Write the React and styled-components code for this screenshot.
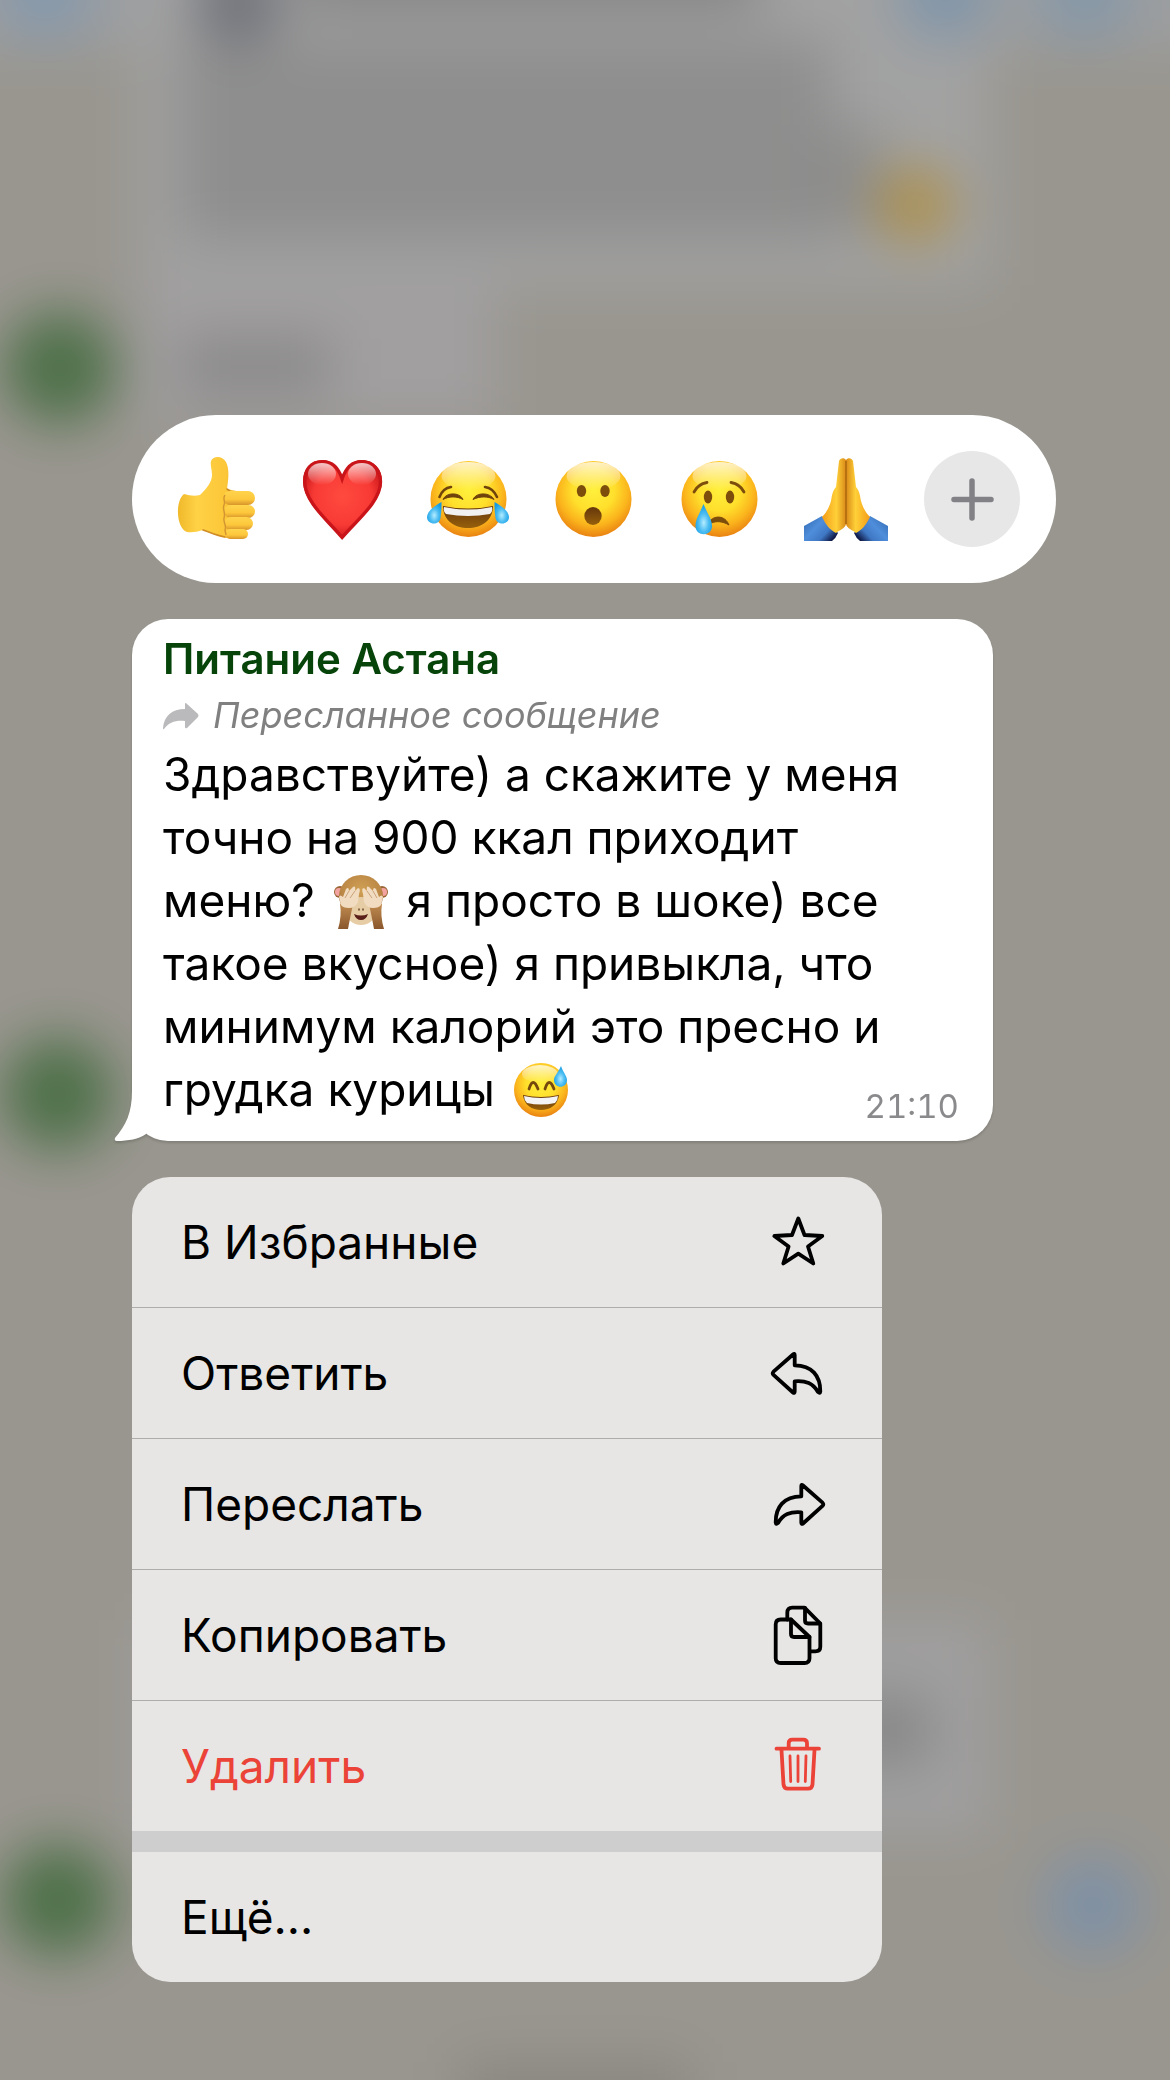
import React from 'react';
import styled, { createGlobalStyle } from 'styled-components';

const GlobalStyle = createGlobalStyle`
    * {
        box-sizing: border-box;
    }
    body {
        margin: 0;
        background-color: #99968f;
        font-family: Inter, "Liberation Sans", sans-serif;
        color: #000;
    }
    button {
        font: inherit;
        color: inherit;
        border: 0;
        padding: 0;
        background: none;
        cursor: pointer;
    }
    svg {
        display: block;
    }
`

const Screen = styled.main`
    position: relative;
    min-height: 100vh;
    padding: 415px 114px 98px 132px;
    display: flex;
    flex-direction: column;
    gap: 36px;
    overflow: hidden;
`

// dimmed chat behind the menu
const Backdrop = styled.svg`
    position: absolute;
    inset: 0;
    width: 100%;
    height: 100%;
    z-index: -1;
`

const Reactions = styled.div`
    width: 100%;
    max-width: 924px;
    padding: 36px 36px 36px 37px;
    border-radius: 84px;
    background-color: #fff;
    display: flex;
    justify-content: space-between;
`
const Reaction = styled.button`
    width: 96px;
    height: 96px;
    border-radius: 50%;
    background-color: ${({ $filled }) => $filled ? '#e7e7e7' : 'transparent'};
`

const Bubble = styled.article`
    position: relative;
    width: 100%;
    max-width: 861px;
    padding: 12px 34px 20px 31px;
    border-radius: 36px;
    background-color: #fff;
    filter: drop-shadow(0 2px 1px rgba(0, 0, 0, 0.14));
`
const Tail = styled.svg`
    position: absolute;
    left: -20px;
    bottom: 0;
`
const Sender = styled.h1`
    margin: 0;
    font-size: 42px;
    line-height: 56px;
    font-weight: 600;
    color: #06440a;
`
const Forwarded = styled.div`
    display: flex;
    align-items: center;
    gap: 14px;
    font-size: 36px;
    line-height: 56px;
    font-style: italic;
    color: #808080;
`
const Content = styled.div`
    display: grid;
`
const Message = styled.p`
    grid-area: 1 / 1;
    margin: 0;
    font-size: 46px;
    line-height: 63px;
    white-space: pre;
`
const InlineEmoji = styled.svg`
    display: inline-block;
    vertical-align: -13px;
    margin: 0 5px;
`
const Time = styled.time`
    grid-area: 1 / 1;
    align-self: end;
    justify-self: end;
    font-size: 33px;
    line-height: 30px;
    font-variant-numeric: tabular-nums;
    color: #8a8a8d;
`

const Menu = styled.div`
    width: 100%;
    max-width: 750px;
    border-radius: 38px;
    overflow: hidden;
    background-color: #e7e6e5;
    display: flex;
    flex-direction: column;
`
const MenuItem = styled.button`
    display: flex;
    align-items: center;
    justify-content: space-between;
    height: 130px;
    padding: 0 54px 0 49px;
    font-size: 46px;
    color: ${({ $danger }) => $danger ? '#eb4338' : '#000'};
`
const Divider = styled.div`
    height: ${({ $thick }) => $thick ? 21 : 1}px;
    background-color: ${({ $thick }) => $thick ? '#cfcece' : '#adadac'};
`

const ChatBackdrop = () => (
    <Backdrop viewBox="0 0 1170 2080" preserveAspectRatio="none" aria-hidden="true">
        <defs>
            <filter id="soft" filterUnits="userSpaceOnUse" x="-150" y="-150" width="1470" height="2380" colorInterpolationFilters="sRGB">
                <feGaussianBlur stdDeviation="27" />
            </filter>
        </defs>
        <rect width="1170" height="2080" fill="#99968f" />
        <g filter="url(#soft)">
            <rect x="-150" y="-150" width="1470" height="2380" fill="#99968f" />
            <rect x="-100" y="-100" width="1370" height="150" fill="#9c9ea0" />
            <rect x="140" y="-100" width="850" height="385" fill="#a2a2a2" />
            <rect x="140" y="270" width="355" height="150" fill="#a19fa0" />
            <rect x="180" y="40" width="650" height="200" fill="#8e8e8e" />
            <rect x="300" y="-80" width="460" height="90" fill="#858585" />
            <rect x="790" y="125" width="90" height="105" fill="#8d8d8c" />
            <rect x="180" y="338" width="150" height="56" fill="#8a898a" />
            <circle cx="238" cy="0" r="44" fill="#70727a" />
            <circle cx="45" cy="-8" r="44" fill="#8398ae" />
            <circle cx="944" cy="-6" r="46" fill="#7f95aa" />
            <circle cx="1085" cy="-6" r="44" fill="#8397a9" />
            <circle cx="915" cy="205" r="38" fill="#ae9049" />
            <circle cx="60" cy="368" r="56" fill="#4d7048" />
            <circle cx="58" cy="1094" r="56" fill="#4d7048" />
            <circle cx="58" cy="1900" r="56" fill="#4d7048" />
            <rect x="140" y="1620" width="850" height="215" fill="#a09fa0" />
            <rect x="190" y="1698" width="740" height="64" fill="#868687" />
            <circle cx="1093" cy="1905" r="48" fill="#7d90a6" />
            <rect x="460" y="2062" width="230" height="100" fill="#8a8680" />
        </g>
    </Backdrop>
)

const EmojiDefs = () => (
    <svg width="0" height="0" style={{ position: 'absolute' }} aria-hidden="true">
        <defs>
            <radialGradient id="face" cx="50%" cy="38%" r="62%">
                <stop offset="0" stopColor="#fff03c" />
                <stop offset="0.45" stopColor="#ffdf2c" />
                <stop offset="0.75" stopColor="#fbb41c" />
                <stop offset="1" stopColor="#e98212" />
            </radialGradient>
            <linearGradient id="shine" x1="0" y1="0" x2="0" y2="1">
                <stop offset="0" stopColor="#fff" stopOpacity="0.75" />
                <stop offset="1" stopColor="#fff" stopOpacity="0" />
            </linearGradient>
            <linearGradient id="mouth" x1="0" y1="0" x2="0" y2="1">
                <stop offset="0" stopColor="#65360b" />
                <stop offset="1" stopColor="#96600b" />
            </linearGradient>
            <radialGradient id="drop" cx="50%" cy="62%" r="60%">
                <stop offset="0" stopColor="#b5ecff" />
                <stop offset="0.5" stopColor="#4cbdf2" />
                <stop offset="1" stopColor="#159be3" />
            </radialGradient>
            <linearGradient id="thumb" x1="0" y1="0" x2="1" y2="0">
                <stop offset="0" stopColor="#f0b92b" />
                <stop offset="0.3" stopColor="#ffd145" />
                <stop offset="0.75" stopColor="#fcc739" />
                <stop offset="1" stopColor="#eeb02c" />
            </linearGradient>
            <linearGradient id="finger" x1="0" y1="0" x2="0" y2="1">
                <stop offset="0" stopColor="#ffd44c" />
                <stop offset="0.6" stopColor="#fdc73c" />
                <stop offset="1" stopColor="#d8942a" />
            </linearGradient>
            <radialGradient id="heart" cx="50%" cy="46%" r="60%">
                <stop offset="0" stopColor="#ff4a3f" />
                <stop offset="0.6" stopColor="#f83a35" />
                <stop offset="1" stopColor="#c00f14" />
            </radialGradient>
            <linearGradient id="palm" x1="0" y1="0" x2="1" y2="0">
                <stop offset="0" stopColor="#f39c18" />
                <stop offset="0.6" stopColor="#ffd038" />
                <stop offset="1" stopColor="#d98a18" />
            </linearGradient>
            <linearGradient id="sleeve" x1="0" y1="0" x2="1" y2="0.7">
                <stop offset="0" stopColor="#2f66ae" />
                <stop offset="0.45" stopColor="#4f8edb" />
                <stop offset="0.75" stopColor="#3f78c4" />
                <stop offset="1" stopColor="#101a48" />
            </linearGradient>
            <radialGradient id="fur" cx="50%" cy="35%" r="65%">
                <stop offset="0" stopColor="#d0a055" />
                <stop offset="0.7" stopColor="#bb8745" />
                <stop offset="1" stopColor="#976532" />
            </radialGradient>
            <linearGradient id="arm" x1="0" y1="0" x2="0" y2="1">
                <stop offset="0" stopColor="#c08b50" />
                <stop offset="1" stopColor="#8a572d" />
            </linearGradient>
        </defs>
    </svg>
)

const Face = () => (
    <>
        <circle cx="47.5" cy="48" r="38" fill="url(#face)" />
        <ellipse cx="47.5" cy="25" rx="27" ry="14" fill="url(#shine)" />
    </>
)

const ThumbsUp = () => (
    <svg width="96" height="96" viewBox="0 0 96 96">
        <path d="M15 43 Q24 46 31 44 C38 37 43 31 43 24 C43 18 41 14 42 10 C44 5 53 4 57 11 C61 19 59 30 58 38 L72 41 V84 Q64 90 50 85 L34 79 Q25 82 18 81 C7 77 6 50 15 43 Z" fill="url(#thumb)" />
        <path d="M58 38 Q62 40 63 44 M34 79 C40 81 49 85 56 86" fill="none" stroke="#cf8b25" strokeWidth="1.6" strokeLinecap="round" />
        <rect x="54" y="40" width="32" height="14" rx="7" fill="url(#finger)" />
        <rect x="55" y="54" width="31" height="13" rx="6.5" fill="url(#finger)" />
        <rect x="55" y="66" width="29" height="13" rx="6.5" fill="url(#finger)" />
        <rect x="56" y="78" width="23" height="10" rx="5" fill="url(#finger)" />
        <path d="M56 44 C53 48 57 50 55 54 C53 58 57 62 55 67 C54 71 58 75 56 79 L57 84" fill="none" stroke="#d39432" strokeWidth="1.4" />
    </svg>
)

const Heart = () => (
    <svg width="96" height="96" viewBox="0 0 96 96">
        <path d="M47 27 C43 15 36 9 27 9 C15 9 8 18 8 30 C8 51 32 70 47 88 C62 70 87 51 87 30 C87 18 79 9 67 9 C58 9 51 15 47 27 Z" fill="url(#heart)" />
        <path d="M47 27 C43 15 36 9 27 9 C15 9 8 18 8 30 C8 51 32 70 47 88 C62 70 87 51 87 30 C87 18 79 9 67 9 C58 9 51 15 47 27 Z" transform="translate(2 2) scale(0.96)" fill="none" stroke="#c9151a" strokeWidth="3.5" />
        <ellipse cx="27" cy="23" rx="14" ry="11" fill="url(#shine)" />
        <ellipse cx="67" cy="23" rx="14" ry="11" fill="url(#shine)" />
    </svg>
)

const Joy = () => (
    <svg width="96" height="96" viewBox="0 0 96 96">
        <Face />
        <path d="M18.5 46 Q22 37 30 36 M76 46 Q72 37 64 36" fill="none" stroke="#6f430b" strokeWidth="2.6" strokeLinecap="round" />
        <path d="M22 48.5 C25 41 39 41 42 48.5 C36 45 28 45 22 48.5 Z M52 48.5 C55 41 69 41 73 48.5 C67 45 59 45 52 48.5 Z" fill="#6f430b" stroke="#6f430b" strokeLinejoin="round" />
        <path d="M22 55 Q47 60 72 55 C72 69 61 77 47 77 C33 77 22 69 22 55 Z" fill="url(#mouth)" />
        <path d="M23 56 Q47 61 71 56 Q72 61 69 63 Q47 67 25 63 Q22 61 23 56 Z" fill="#f1f1f1" />
        <path d="M20.5 51 C15 54 6 60 6 66 C6 74 18 75 19.5 67 C20.5 61 20.5 55 20.5 51 Z" fill="url(#drop)" />
        <path d="M73.5 51 C79 54 88 60 88 66 C88 74 76 75 74.5 67 C73.5 61 73.5 55 73.5 51 Z" fill="url(#drop)" />
    </svg>
)

const Wow = () => (
    <svg width="96" height="96" viewBox="0 0 96 96">
        <Face />
        <ellipse cx="35.5" cy="40" rx="4.7" ry="6" fill="#7d4d0b" />
        <ellipse cx="59" cy="40" rx="4.7" ry="6" fill="#7d4d0b" />
        <ellipse cx="47" cy="65" rx="8.7" ry="9" fill="url(#mouth)" />
    </svg>
)

const Crying = () => (
    <svg width="96" height="96" viewBox="0 0 96 96">
        <Face />
        <ellipse cx="36" cy="46" rx="4.2" ry="6.5" fill="#7d4d0b" />
        <ellipse cx="58" cy="46" rx="4.2" ry="6.5" fill="#7d4d0b" />
        <path d="M22 41 Q26 33 35 31.5 M72 41 Q68 33 59 31.5" fill="none" stroke="#7d4d0b" strokeWidth="2.8" strokeLinecap="round" />
        <path d="M37 71 C42 64 53 64 57 74 C50 70 45 70 39 72 Z" fill="#7d4d0b" stroke="#7d4d0b" strokeLinejoin="round" />
        <path d="M31.5 53 C28 62 23.5 68 23.5 75 C23.5 86 40 86 40 75 C40 68 35 62 31.5 53 Z" fill="url(#drop)" />
    </svg>
)

const Pray = () => (
    <svg width="96" height="96" viewBox="0 0 96 96">
        <g id="hand">
            <path d="M6 75 L24 65 L40 82 Q38 87 34 90 H6 Z" fill="url(#sleeve)" />
            <path d="M48 9 C46 6 42 7 41 10 L38 36 C34 41 34 45 33 50 C31 57 28 62 24 66 C28 74 32 79 38 82 C41 79 47 78 48 73 Z" fill="url(#palm)" />
        </g>
        <use href="#hand" transform="matrix(-1 0 0 1 96 0)" />
        <path d="M48 10 V73" stroke="#a8650f" strokeWidth="1.4" />
    </svg>
)

const Plus = () => (
    <svg width="96" height="96" viewBox="0 0 96 96">
        <path d="M48 30 V67 M30 48.5 H67" stroke="#828186" strokeWidth="5.5" strokeLinecap="round" />
    </svg>
)

const Monkey = () => (
    <InlineEmoji width="56" height="56" viewBox="0 0 56 56" role="img" aria-label="Обезьянка закрыла глаза">
        <circle cx="7" cy="18" r="6" fill="#9a6636" />
        <circle cx="49" cy="18" r="6" fill="#9a6636" />
        <circle cx="6" cy="18" r="4" fill="#f3a3a0" />
        <circle cx="50" cy="18" r="4" fill="#f3a3a0" />
        <ellipse cx="28" cy="22" rx="22" ry="21" fill="url(#fur)" />
        <ellipse cx="28" cy="37" rx="15" ry="14" fill="#e6cda6" />
        <path d="M21 40 Q28 43 35 40 Q33 46 28 46 Q23 46 21 40 Z" fill="#5a1f18" />
        <path d="M26 35 v1 M30 35 v1" stroke="#6f4b2c" strokeWidth="1.5" strokeLinecap="round" />
        <path d="M5 55 Q9 42 7 30 H20 Q17 44 15 55 Z M51 55 Q47 42 49 30 H36 Q39 44 41 55 Z" fill="url(#arm)" />
        <path d="M8 31 L6 23 Q7 20 10 23 L13 15 Q16 12 16 17 L20 13 Q23 11 22 17 L25 14 Q28 14 26 20 L25 28 Q22 34 16 34 Q10 34 8 31 Z M48 31 L50 23 Q49 20 46 23 L43 15 Q40 12 40 17 L36 13 Q33 11 34 17 L31 14 Q28 14 30 20 L31 28 Q34 34 40 34 Q46 34 48 31 Z" fill="#f2dcc1" />
        <path d="M12 24 L16 17 M17 24 L22 17 M44 24 L40 17 M39 24 L34 17" stroke="#c9a27a" strokeWidth="1" />
    </InlineEmoji>
)

const Sweat = () => (
    <InlineEmoji width="56" height="56" viewBox="0 0 56 56" role="img" aria-label="Улыбка с каплей пота">
        <circle cx="28" cy="27" r="27" fill="url(#face)" />
        <ellipse cx="27" cy="11" rx="18" ry="9" fill="url(#shine)" />
        <path d="M16 26 Q20 13 25 26 M32 26 Q36 13 41 26" fill="none" stroke="#75490d" strokeWidth="2.8" strokeLinecap="round" strokeLinejoin="round" />
        <path d="M10 32 Q28 36 46 32 C45 42 37 47 28 47 C19 47 11 42 10 32 Z" fill="url(#mouth)" />
        <path d="M11 33 Q28 37 45 33 Q45 37 42 40 Q28 43 14 40 Q11 37 11 33 Z" fill="#f4f4f4" />
        <path d="M48 3 C45 10 41 13 41 17 C41 26 54 26 54 17 C54 13 50 9 48 3 Z" fill="url(#drop)" />
    </InlineEmoji>
)

const ForwardedArrow = () => (
    <svg width="36" height="30" viewBox="0 0 36 30" aria-hidden="true">
        <path d="M22 4 Q22 2 24 4 L35 14 Q36 16 35 17 L24 28 Q22 29 22 27 V21 C13 20 6 22 1 29 Q0 30 0 28 C1 16 9 9 22 9 Z" fill="#bababc" />
    </svg>
)

const MenuIcon = ({ children }) => (
    <svg width="60" height="60" viewBox="0 0 60 60" fill="none" stroke="currentColor" strokeWidth="3.8" strokeLinecap="round" strokeLinejoin="round" aria-hidden="true">
        {children}
    </svg>
)

const reactions = [
    { name: 'Нравится', Icon: ThumbsUp },
    { name: 'Сердце', Icon: Heart },
    { name: 'Смех', Icon: Joy },
    { name: 'Удивление', Icon: Wow },
    { name: 'Грусть', Icon: Crying },
    { name: 'Спасибо', Icon: Pray },
]

const actions = [
    {
        label: 'В Избранные',
        icon: <path d="M30.3 6.5 L36.5 23 L54.3 24 L40 34.5 L45.3 51.5 L30.3 41.7 L15.3 51.5 L20.6 34.5 L6.3 24 L24 23 Z" />,
    },
    {
        label: 'Ответить',
        icon: <path d="M25 11.5 L5.5 28.7 Q4 30.3 5.5 31.9 L25 49.5 Q26.7 50.5 26.7 48.5 V38.3 C38 37.5 45 40 50 49 Q52 51 52.3 48.5 C52.5 33 44 22.3 26.7 22.3 V12 Q26.7 10 25 11.5 Z" />,
    },
    {
        label: 'Переслать',
        icon: <path d="M35 11.5 L54.5 28.7 Q56 30.3 54.5 31.9 L35 49.5 Q33.3 50.5 33.3 48.5 V38.3 C22 37.5 15 40 10 49 Q8 51 7.7 48.5 C7.5 33 16 22.3 33.3 22.3 V12 Q33.3 10 35 11.5 Z" />,
    },
    {
        label: 'Копировать',
        icon: (
            <>
                <path d="M23 14.5 H12.7 Q7.7 14.5 7.7 19.5 V53.3 Q7.7 58 12.7 58 H36.5 Q41.5 58 41.5 53.3 V32 Z" />
                <path d="M23 14.5 V29 Q23 32 26 32 H41.5" />
                <path d="M19.3 14.5 V7.7 Q19.3 2.7 24.3 2.7 H36.5 L52.3 18.5 V41.7 Q52.3 46.3 47.3 46.3 H42" />
                <path d="M37 3 V15.5 Q37 18.5 40 18.5 H52" />
            </>
        ),
    },
    {
        label: 'Удалить',
        danger: true,
        icon: (
            <>
                <path d="M8.5 12.7 H51 M20.7 12 V7.3 Q20.7 3.7 24.3 3.7 H35.3 Q39 3.7 39 7.3 V12" />
                <path d="M13.5 14 L15.5 48.5 Q16 52.7 20 52.7 H40 Q44 52.7 44.5 48.5 L46.5 14" />
                <path d="M22 20 L22.7 45.5 M30 20 V45.5 M38 20 L37.3 45.5" strokeWidth="2.8" />
            </>
        ),
    },
]

export default function App() {
    return (
        <Screen>
            <GlobalStyle />
            <EmojiDefs />
            <ChatBackdrop />
            <Reactions>
                {reactions.map(({ name, Icon }) => (
                    <Reaction key={name} type="button" aria-label={name}>
                        <Icon />
                    </Reaction>
                ))}
                <Reaction $filled type="button" aria-label="Другая реакция">
                    <Plus />
                </Reaction>
            </Reactions>
            <Bubble>
                <Tail width="60" height="50" viewBox="0 0 60 50" aria-hidden="true">
                    <path d="M20 0 C20 22 14 34 3 47 Q2 50 5 50 C16 50 27 48 34 43 L50 20 V0 Z" fill="#fff" />
                </Tail>
                <Sender>Питание Астана</Sender>
                <Forwarded>
                    <ForwardedArrow />
                    Пересланное сообщение
                </Forwarded>
                <Content>
                    <Message>
                        Здравствуйте) а скажите у меня<br />
                        точно на 900 ккал приходит<br />
                        меню? <Monkey /> я просто в шоке) все<br />
                        такое вкусное) я привыкла, что<br />
                        минимум калорий это пресно и<br />
                        грудка курицы <Sweat />
                    </Message>
                    <Time>21:10</Time>
                </Content>
            </Bubble>
            <Menu>
                {actions.map(({ label, icon, danger }, i) => (
                    <React.Fragment key={label}>
                        {i > 0 && <Divider />}
                        <MenuItem type="button" $danger={danger}>
                            {label}
                            <MenuIcon>{icon}</MenuIcon>
                        </MenuItem>
                    </React.Fragment>
                ))}
                <Divider $thick />
                <MenuItem type="button">Ещё...</MenuItem>
            </Menu>
        </Screen>
    )
}
